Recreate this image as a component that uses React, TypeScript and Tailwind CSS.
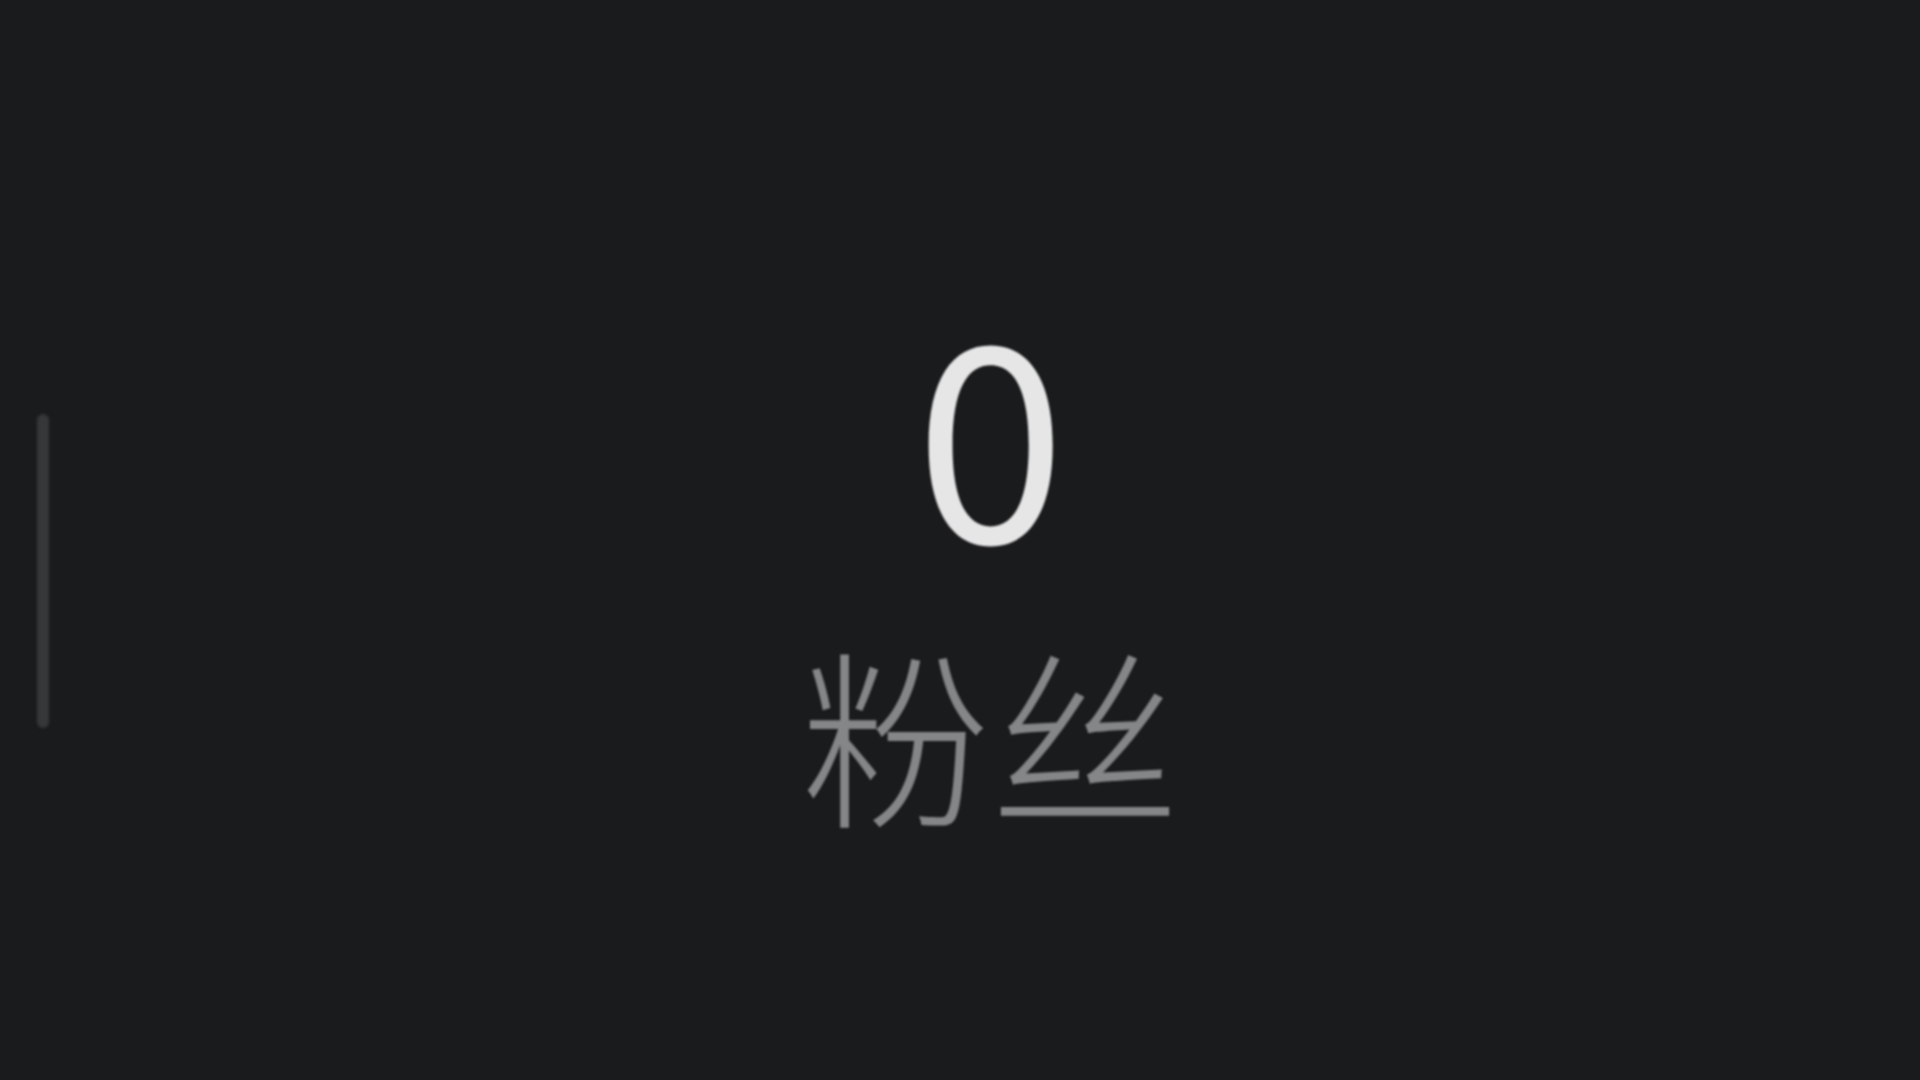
import React from 'react';

const stats = [{ label: '粉丝', value: 0 }];

export default function App() {
  return (
    <div
      className="w-full h-screen overflow-hidden bg-[#1a1b1d] flex items-start"
      style={{ fontFamily: '"Noto Sans CJK SC", "Noto Sans", sans-serif' }}
    >
      <div className="ml-[37px] mt-[414px] w-[12px] h-[314px] rounded-full bg-[#363738] blur-[1.5px]" />
      {stats.map((s) => (
        <div key={s.label} className="flex-1 flex flex-col items-center pl-[12px] pt-[288px] blur-[1.2px]">
          <span className="text-[272px] leading-none text-[#e6e6e6]">{s.value}</span>
          <span className="mt-[76px] text-[190px] leading-none font-light text-[#858687]">{s.label}</span>
        </div>
      ))}
    </div>
  );
}
